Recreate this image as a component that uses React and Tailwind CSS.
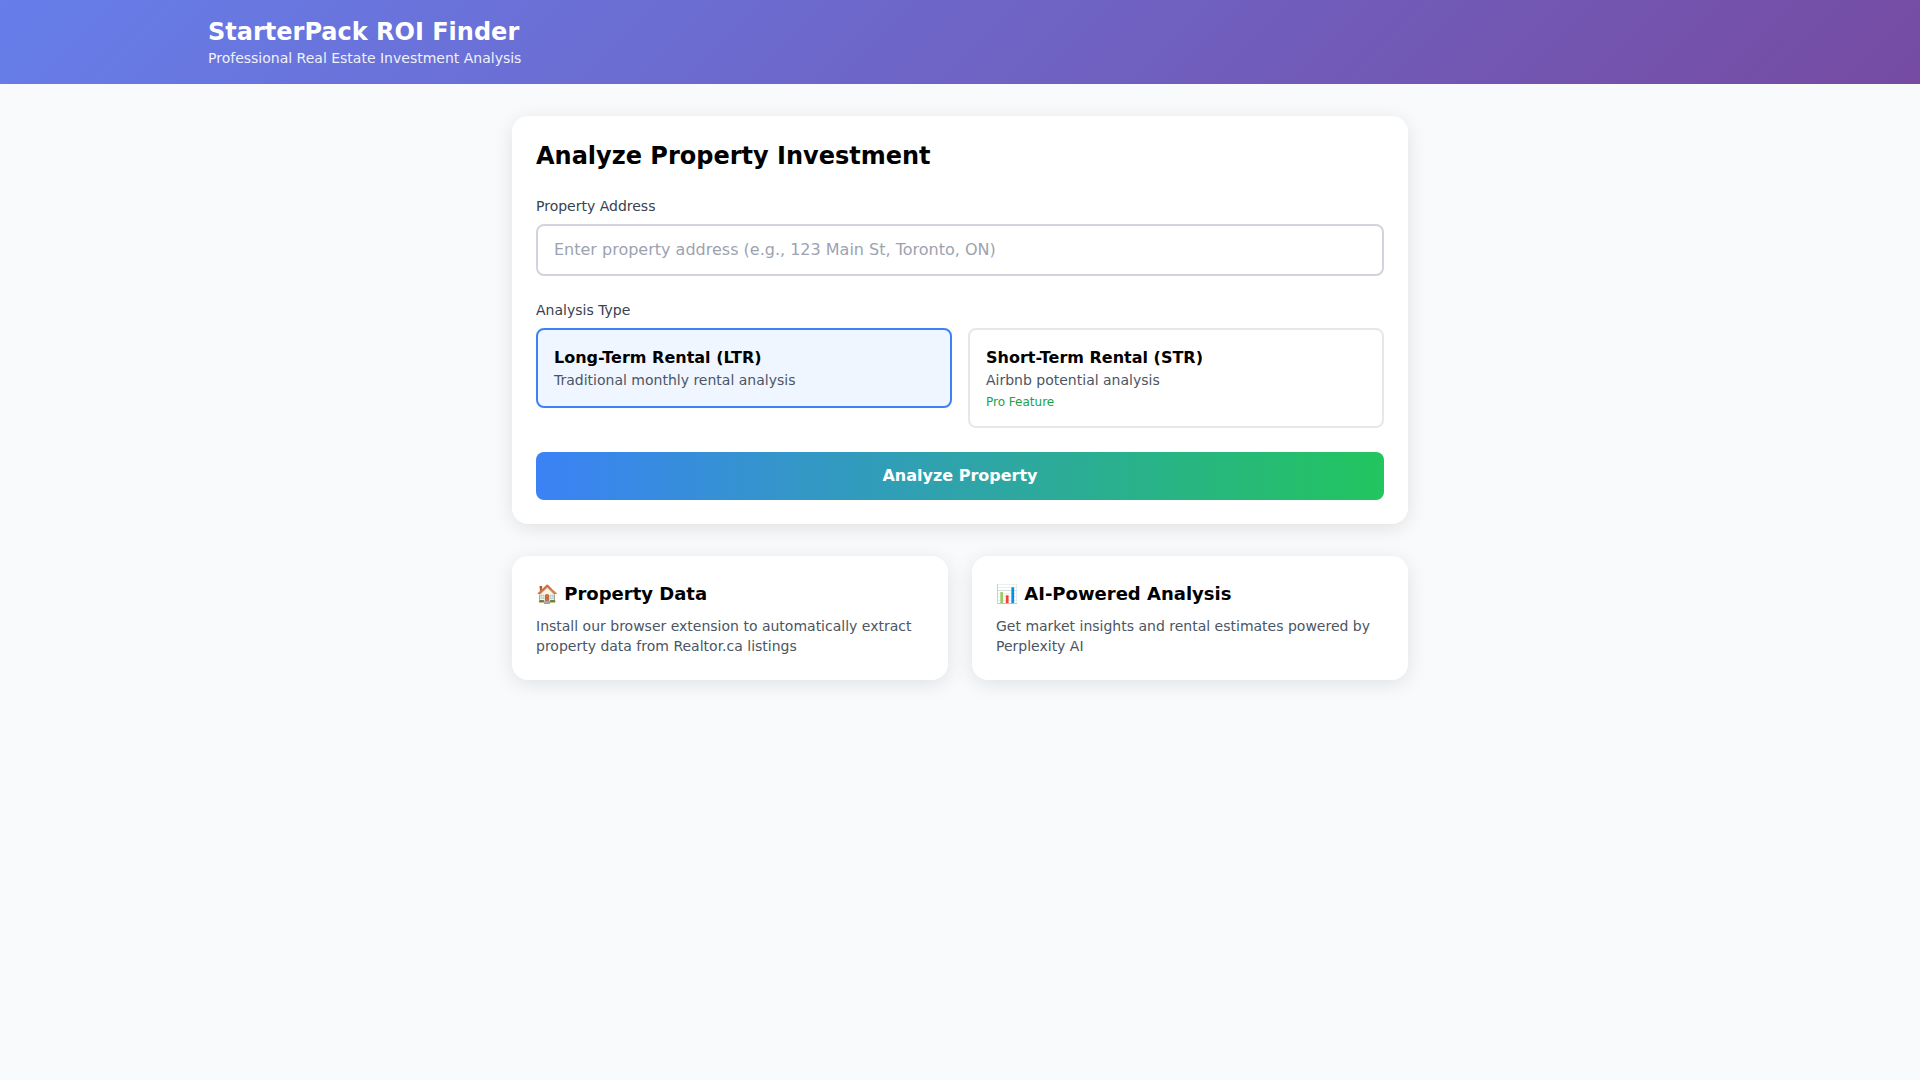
function InfoCard({ title, text }) {
  return (
    <div className="rounded-2xl bg-white p-6 shadow-[0_4px_20px_rgba(0,0,0,0.1)]">
      <h3 className="mb-2 text-lg font-semibold">{title}</h3>
      <p className="text-sm text-[#4b5563]">{text}</p>
    </div>
  );
}

export default function App() {
  return (
    <div className="min-h-screen bg-[#f9fafb] font-['DejaVu_Sans',sans-serif] text-black">
      <header className="bg-[linear-gradient(135deg,#667eea_0%,#764ba2_100%)] py-4 text-white">
        <div className="mx-auto max-w-[1536px] px-4">
          <h1 className="text-2xl font-bold">StarterPack ROI Finder</h1>
          <p className="text-sm opacity-90">Professional Real Estate Investment Analysis</p>
        </div>
      </header>
      <main className="mx-auto max-w-4xl py-8">
        <section className="mb-8 rounded-2xl bg-white p-6 shadow-[0_4px_20px_rgba(0,0,0,0.1)]">
          <h2 className="mb-6 text-2xl font-bold">Analyze Property Investment</h2>
          <label htmlFor="address" className="mb-2 block text-sm font-medium text-[#374151]">
            Property Address
          </label>
          <input
            id="address"
            className="mb-6 block w-full rounded-lg border-2 border-[#d1d5db] px-4 py-3 text-base placeholder:text-[#9ca3af]"
            placeholder="Enter property address (e.g., 123 Main St, Toronto, ON)"
          />
          <div className="mb-2 text-sm font-medium text-[#374151]">Analysis Type</div>
          <div className="mb-6 grid grid-cols-2 items-start gap-4">
            <div className="rounded-lg border-2 border-[#3b82f6] bg-[#eff6ff] p-4">
              <div className="font-semibold">Long-Term Rental (LTR)</div>
              <div className="text-sm text-[#4b5563]">Traditional monthly rental analysis</div>
            </div>
            <div className="rounded-lg border-2 border-[#e5e7eb] p-4">
              <div className="font-semibold">Short-Term Rental (STR)</div>
              <div className="text-sm text-[#4b5563]">Airbnb potential analysis</div>
              <div className="mt-1 text-xs text-[#16a34a]">Pro Feature</div>
            </div>
          </div>
          <button className="block w-full rounded-lg bg-[linear-gradient(to_right,#3b82f6,#22c55e)] px-6 py-3 font-semibold text-white">
            Analyze Property
          </button>
        </section>
        <div className="grid grid-cols-2 gap-6">
          <InfoCard
            title="🏠 Property Data"
            text="Install our browser extension to automatically extract property data from Realtor.ca listings"
          />
          <InfoCard
            title="📊 AI-Powered Analysis"
            text="Get market insights and rental estimates powered by Perplexity AI"
          />
        </div>
      </main>
    </div>
  );
}
